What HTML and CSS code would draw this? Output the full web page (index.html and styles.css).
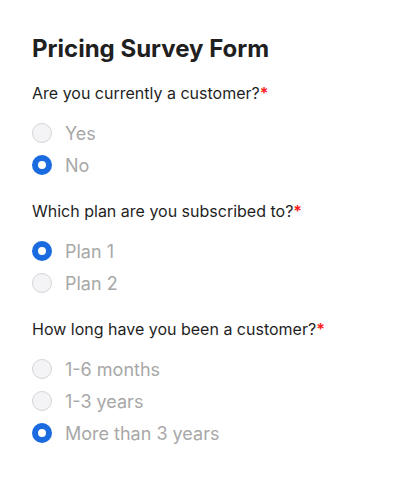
FILE: index.html
```html
<!DOCTYPE html>
<html>
<head>
<meta charset="utf-8">
<link rel="stylesheet" href="styles.css">
</head>
<body>
<form class="form">
  <h1 class="title">Pricing Survey Form</h1>
  <div class="group" role="radiogroup">
    <div class="question">Are you currently a customer?<span class="req">*</span></div>
    <div class="options">
      <label class="option"><span class="radio"></span><span class="label">Yes</span></label>
      <label class="option"><span class="radio checked"></span><span class="label">No</span></label>
    </div>
  </div>
  <div class="group" role="radiogroup">
    <div class="question">Which plan are you subscribed to?<span class="req">*</span></div>
    <div class="options">
      <label class="option"><span class="radio checked"></span><span class="label">Plan 1</span></label>
      <label class="option"><span class="radio"></span><span class="label">Plan 2</span></label>
    </div>
  </div>
  <div class="group" role="radiogroup">
    <div class="question">How long have you been a customer?<span class="req">*</span></div>
    <div class="options">
      <label class="option"><span class="radio"></span><span class="label">1-6 months</span></label>
      <label class="option"><span class="radio"></span><span class="label">1-3 years</span></label>
      <label class="option"><span class="radio checked"></span><span class="label">More than 3 years</span></label>
    </div>
  </div>
</form>
</body>
</html>
```
FILE: styles.css
```css
html, body {
  margin: 0;
  padding: 0;
  background: #ffffff;
}
body {
  font-family: Inter, "Noto Sans", sans-serif;
  color: #1f1f1f;
}
.form {
  padding: 33px 32px 0 32px;
  display: flex;
  flex-direction: column;
}
.title {
  margin: 0 0 16px 0;
  font-size: 24px;
  line-height: 32px;
  font-weight: 700;
  color: #202020;
}
.group {
  display: flex;
  flex-direction: column;
}
.group + .group {
  margin-top: 18px;
}
.question {
  font-size: 16px;
  line-height: 24px;
  color: #1f1f1f;
}
.req {
  color: #ff1a1a;
  font-weight: 600;
}
.options {
  display: flex;
  flex-direction: column;
  padding-top: 12px;
}
.option {
  display: flex;
  align-items: center;
  gap: 13px;
  height: 32px;
}
.radio {
  box-sizing: border-box;
  width: 20px;
  height: 20px;
  border-radius: 50%;
  border: 1.5px solid #d4d4d8;
  background: #f4f4f6;
  flex: none;
}
.radio.checked {
  border: 6px solid #1a6be0;
  background: #ffffff;
}
.label {
  font-size: 18px;
  color: #a8a8a8;
}
```
